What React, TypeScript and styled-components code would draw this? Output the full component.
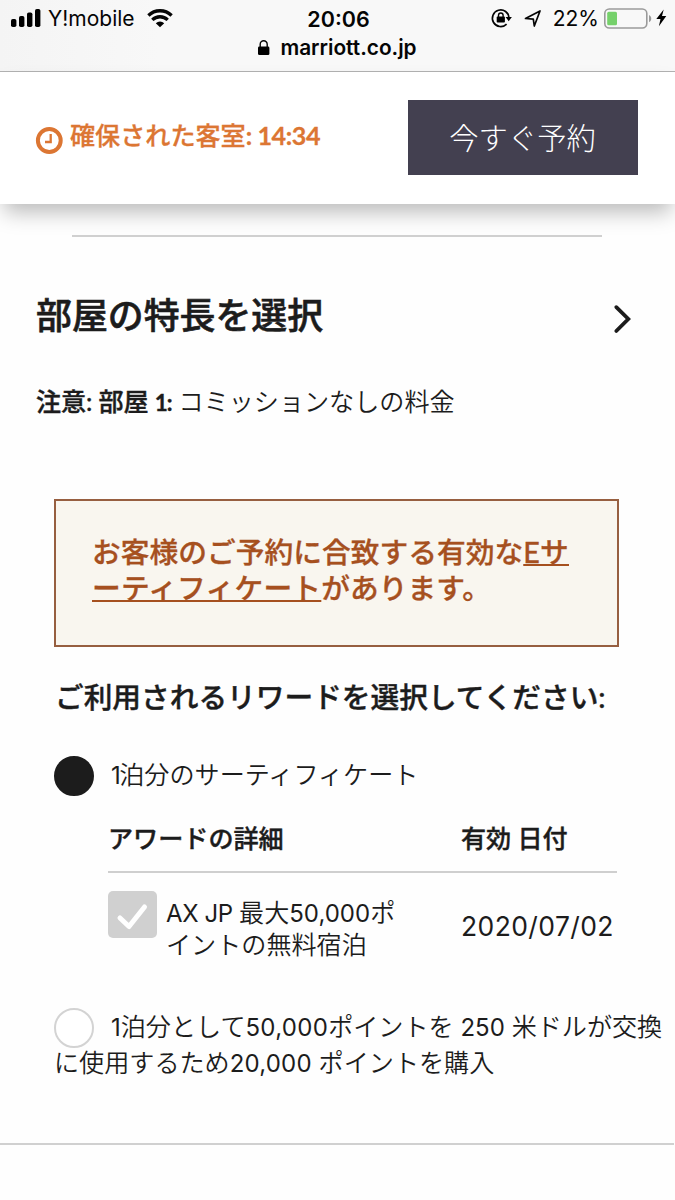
import React from 'react';
import styled, { createGlobalStyle } from 'styled-components';

const Global = createGlobalStyle`
  * { box-sizing: border-box; }
  html, body { margin: 0; padding: 0; background: #fefefe; }
  body { font-family: Lato, "Noto Sans CJK JP", sans-serif; color: #1c1c1c; }
  h1, h2, p { margin: 0; font-weight: inherit; }
`;

const Screen = styled.div`
  width: 675px;
  height: 1200px;
  overflow: hidden;
  display: flex;
  flex-direction: column;
  background: #fefefe;
`;

/* ---- Browser chrome ---- */
const Chrome = styled.header`
  height: 72px;
  flex: none;
  background: linear-gradient(90deg, #f4f4f4, #f8f8f8 160px);
  border-bottom: 1px solid #b2b2b2;
  font-family: Inter, sans-serif;
  color: #050505;
`;

const StatusRow = styled.div`
  display: grid;
  grid-template-columns: 1fr auto 1fr;
  align-items: center;
  height: 28px;
  padding: 9px 8px 0 10px;
`;

const StatusGroup = styled.div<{ $end?: boolean }>`
  display: flex;
  align-items: center;
  justify-content: ${(p) => (p.$end ? 'flex-end' : 'flex-start')};
  height: 20px;
`;

const StatusText = styled.span<{ $size: number; $gap?: number; $strong?: boolean }>`
  margin-left: ${(p) => p.$gap ?? 0}px;
  font-size: ${(p) => p.$size}px;
  line-height: 20px;
  font-weight: ${(p) => (p.$strong ? 600 : 400)};
  white-space: nowrap;
`;

const Icon = styled.svg<{ $gap?: number }>`
  display: block;
  flex: none;
  margin-left: ${(p) => p.$gap ?? 0}px;
  overflow: visible;
`;

const AddressRow = styled.div`
  display: flex;
  justify-content: center;
  align-items: center;
  gap: 10px;
  height: 20px;
  margin-top: 10px;
`;

/* ---- Sticky booking bar ---- */
const BookingBar = styled.div`
  position: relative;
  z-index: 1;
  flex: none;
  display: flex;
  justify-content: space-between;
  align-items: flex-start;
  height: 132px;
  padding: 28px 37px 0 36px;
  background: #fff;
  box-shadow: 0 12px 20px -4px rgba(0, 0, 0, 0.27);
`;

const Timer = styled.div`
  display: flex;
  align-items: flex-start;
  gap: 7px;
  padding-top: 17px;
  color: #dc7633;
  font-size: 25.1px;
  line-height: 36px;
  font-weight: 500;
  white-space: nowrap;
  -webkit-text-stroke: 0.3px currentColor;
  svg { margin-top: 10px; }
`;

const Countdown = styled.b`
  font-weight: 700;
  letter-spacing: -0.4px;
`;

const BookButton = styled.button`
  width: 230px;
  height: 75px;
  border: 0;
  padding: 0 1px 3px 0;
  background: #434050;
  color: #fff;
  font-family: "Noto Sans CJK JP", sans-serif;
  font-size: 29.3px;
  font-weight: 300;
  line-height: 72px;
`;

/* ---- Page content ---- */
const Content = styled.main`
  display: flex;
  flex-direction: column;
`;

const TopRule = styled.hr`
  width: 530px;
  height: 2px;
  border: 0;
  margin: 31px 0 0 72px;
  background: #d0d0d0;
`;

const FeatureRow = styled.div`
  display: flex;
  justify-content: space-between;
  align-items: center;
  height: 54px;
  margin: 51px 44px 0 36px;
  svg { margin-top: 4px; }
`;

const FeatureTitle = styled.h1`
  padding-top: 1px;
  font-size: 35.9px;
  line-height: 54px;
  font-weight: 500;
  -webkit-text-stroke: 0.6px currentColor;
`;

const Notice = styled.p`
  margin: 41px 0 0 36px;
  height: 36px;
  line-height: 36px;
  font-size: 25.1px;
  font-weight: 350;
  white-space: nowrap;
`;

const NoticeLabel = styled.b`
  font-weight: 500;
  letter-spacing: -0.1px;
  -webkit-text-stroke: 0.4px currentColor;
`;

const RoomNumber = styled.span`
  font-size: 22.5px;
  font-weight: 700;
  letter-spacing: -0.9px;
`;

const Alert = styled.section`
  width: 565px;
  height: 148px;
  margin: 80px 0 0 54px;
  padding: 33px 36px;
  border: 2px solid #975f40;
  background: #f9f6ef;
  color: #a6501f;
  font-size: 28.75px;
  line-height: 36px;
  font-weight: 500;
  white-space: nowrap;
  -webkit-text-stroke: 0.3px currentColor;
`;

const CertLink = styled.a`
  letter-spacing: 0.2px;
  text-decoration: underline;
  text-decoration-thickness: 2px;
  text-underline-offset: 1px;
  text-decoration-skip-ink: none;
`;

const SectionTitle = styled.h2`
  margin: 32px 0 0 55px;
  height: 36px;
  line-height: 36px;
  font-size: 28.7px;
  font-weight: 500;
  white-space: nowrap;
  -webkit-text-stroke: 0.4px currentColor;
`;

const Option = styled.label<{ $top: number }>`
  display: block;
  margin: ${(p) => p.$top}px 0 0 54px;
  font-size: 25.1px;
  line-height: 36px;
  font-weight: 350;
  white-space: nowrap;
`;

const OptionLine = styled.span`
  display: flex;
  align-items: center;
  height: 36px;
`;

const Radio = styled.span<{ $on?: boolean }>`
  flex: none;
  width: 40px;
  height: 40px;
  margin: 3px 17px 0 0;
  border-radius: 50%;
  background: ${(p) => (p.$on ? '#1c1c1c' : '#fff')};
  border: 2px solid ${(p) => (p.$on ? '#1c1c1c' : '#d3d3d3')};
`;

const OptionText = styled.span`
  padding-bottom: 1px;
`;

const Latin = styled.span<{ $ls?: number; $size?: number }>`
  font-family: Inter, sans-serif;
  font-weight: 400;
  font-size: ${(p) => p.$size ?? 24}px;
  line-height: 1;
  letter-spacing: ${(p) => p.$ls ?? 0}px;
`;

const AwardTable = styled.div`
  width: 509px;
  margin: 28px 0 0 108px;
`;

const AwardRow = styled.div<{ $head?: boolean }>`
  display: grid;
  grid-template-columns: 353px 1fr;
  height: ${(p) => (p.$head ? 53 : 90)}px;
  border-bottom: ${(p) => (p.$head ? '2px solid #cfcfcf' : '0')};
  font-size: 25.1px;
  line-height: 36px;
  font-weight: ${(p) => (p.$head ? 500 : 350)};
  -webkit-text-stroke: ${(p) => (p.$head ? '0.4px currentColor' : '0')};
  white-space: nowrap;
`;

const Award = styled.div`
  display: flex;
  gap: 9px;
  padding-top: 18px;
`;

const Check = styled.span`
  display: flex;
  flex: none;
  width: 49px;
  height: 47px;
  border-radius: 5px;
  background: #d0d0d0;
`;

const AwardName = styled.div`
  padding-top: 5px;
  line-height: 32px;
`;

const AwardDate = styled.div`
  padding-top: 35px;
`;

const BottomRule = styled.hr`
  width: 674px;
  height: 2px;
  border: 0;
  margin: 63px 0 0;
  background: #d0d0d0;
`;

function SignalIcon() {
  return (
    <Icon width="31" height="20" viewBox="0 0 31 20">
      <rect x="1" y="10" width="5.4" height="8" rx="1.8" />
      <rect x="9" y="7" width="5.4" height="11" rx="1.8" />
      <rect x="17" y="3.5" width="5.4" height="14.5" rx="1.8" />
      <rect x="25" y="0" width="5.4" height="18" rx="1.8" />
    </Icon>
  );
}

function WifiIcon() {
  return (
    <Icon $gap={12} width="26" height="20" viewBox="0 0 26 20">
      <g fill="none" stroke="#050505" strokeWidth="3.3">
        <path d="M1.4 6.5a16.6 16.6 0 0 1 23.2 0" />
        <path d="M5.3 10.9a11 11 0 0 1 15.4 0" />
      </g>
      <path d="M8.8 14.2a6.2 6.2 0 0 1 8.4 0L13 18.3z" />
    </Icon>
  );
}

function RotationLockIcon() {
  return (
    <Icon width="22" height="20" viewBox="0 0 22 20">
      <path d="M15.6 15.1A8.3 8.3 0 1 1 18 9" fill="none" stroke="#050505" strokeWidth="1.7" />
      <path d="M14.6 8h6.3l-3.2 4.2z" />
      <rect x="5.7" y="7.6" width="8.2" height="6" rx=".8" />
      <path d="M7.5 8V6.3a2.3 2.3 0 0 1 4.6 0V8" fill="none" stroke="#050505" strokeWidth="1.4" />
    </Icon>
  );
}

function LocationIcon() {
  return (
    <Icon $gap={11} width="18" height="20" viewBox="0 0 18 20">
      <path d="M1.5 9.5 16 2 10.3 17 9.3 10.2z" fill="none" stroke="#050505" strokeWidth="1.7" strokeLinejoin="round" />
    </Icon>
  );
}

function BatteryIcon() {
  return (
    <Icon $gap={5} width="48" height="20" viewBox="0 0 48 20">
      <rect x=".8" y="0" width="42" height="19" rx="4.5" fill="none" stroke="#9a9a9a" strokeWidth="1.6" />
      <rect x="3.2" y="2.7" width="9.8" height="13.6" rx="1.5" fill="#76d16b" />
      <path d="M45 5.9c3 1.5 3 5.8 0 7.3z" fill="#9a9a9a" />
    </Icon>
  );
}

function BoltIcon() {
  return (
    <Icon $gap={4} width="11" height="20" viewBox="0 0 11 20">
      <path d="M7.7.5.3 10h4.2l-1.6 7.2L10.3 7H6z" />
    </Icon>
  );
}

export default function App() {
  return (
    <Screen>
      <Global />
      <Chrome>
        <StatusRow>
          <StatusGroup>
            <SignalIcon />
            <StatusText $size={21} $gap={7}>Y!mobile</StatusText>
            <WifiIcon />
          </StatusGroup>
          <StatusText $size={21.5} $strong>20:06</StatusText>
          <StatusGroup $end>
            <RotationLockIcon />
            <LocationIcon />
            <StatusText $size={21} $gap={11}>22%</StatusText>
            <BatteryIcon />
            <BoltIcon />
          </StatusGroup>
        </StatusRow>
        <AddressRow>
          <Icon width="12" height="16" viewBox="0 0 12 16">
            <rect x="0" y="6.5" width="11.4" height="8.6" rx="1.4" />
            <path d="M2.2 7.5V4.2a3.5 3.5 0 0 1 7 0V7.5" fill="none" stroke="#050505" strokeWidth="1.4" />
          </Icon>
          <StatusText $size={20.8} $strong>marriott.co.jp</StatusText>
        </AddressRow>
      </Chrome>

      <BookingBar>
        <Timer>
          <Icon width="27" height="27" viewBox="0 0 27 27">
            <circle cx="13.3" cy="13.5" r="11.4" fill="none" stroke="#dc7633" strokeWidth="4" />
            <path d="M14.7 7v8H9" fill="none" stroke="#dc7633" strokeWidth="2.3" />
          </Icon>
          <span>確保された客室<Countdown>: 14:34</Countdown></span>
        </Timer>
        <BookButton>今すぐ予約</BookButton>
      </BookingBar>

      <Content>
        <TopRule />
        <FeatureRow>
          <FeatureTitle>部屋の特長を選択</FeatureTitle>
          <Icon width="17" height="28" viewBox="0 0 17 28">
            <path d="M2.3 4.2 14.3 16 2.3 28" fill="none" stroke="#1c1c1c" strokeWidth="3.8" strokeLinecap="round" />
          </Icon>
        </FeatureRow>
        <Notice>
          <NoticeLabel>注意: 部屋 <RoomNumber>1:</RoomNumber></NoticeLabel> コミッションなしの料金
        </Notice>

        <Alert>
          お客様のご予約に合致する有効な<CertLink>Eサ<br />ーティフィケート</CertLink>があります。
        </Alert>

        <SectionTitle>ご利用されるリワードを選択してください:</SectionTitle>

        <Option $top={41}>
          <OptionLine>
            <Radio $on />
            <OptionText><Latin $ls={-1.5}>1</Latin>泊分のサーティフィケート</OptionText>
          </OptionLine>
        </Option>

        <AwardTable>
          <AwardRow $head>
            <span>アワードの詳細</span>
            <span>有効 日付</span>
          </AwardRow>
          <AwardRow>
            <Award>
              <Check>
                <Icon width="49" height="47" viewBox="0 0 49 47">
                  <path d="M12 27 21 35.5 36.5 16" fill="none" stroke="#fff" strokeWidth="5" strokeLinecap="round" strokeLinejoin="round" />
                </Icon>
              </Check>
              <AwardName>
                <Latin $ls={-0.4}>AX JP </Latin>最大<Latin>50,000</Latin>ポ<br />イントの無料宿泊
              </AwardName>
            </Award>
            <AwardDate><Latin $size={26.5} $ls={0.4}>2020/07/02</Latin></AwardDate>
          </AwardRow>
        </AwardTable>

        <Option $top={45}>
          <OptionLine>
            <Radio />
            <OptionText>
              <Latin>1</Latin>泊分として<Latin $ls={0.3}>50,000</Latin>ポイントを <Latin>250</Latin> 米ドルが交換
            </OptionText>
          </OptionLine>
          <OptionLine>
            <OptionText>に使用するため<Latin $ls={0.2}>20,000</Latin> ポイントを購入</OptionText>
          </OptionLine>
        </Option>
        <BottomRule />
      </Content>
    </Screen>
  );
}
